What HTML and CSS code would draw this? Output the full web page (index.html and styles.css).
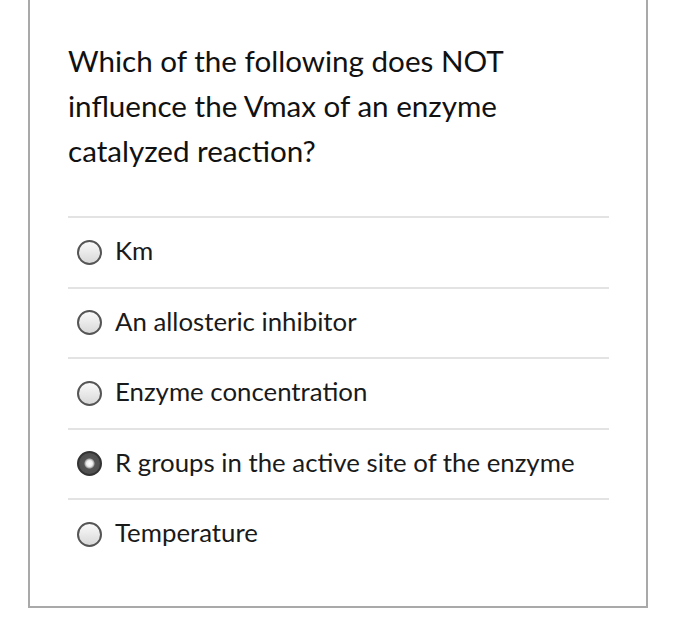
FILE: index.html
```html
<!DOCTYPE html>
<html>
<head>
<meta charset="utf-8">
<link rel="stylesheet" href="styles.css">
</head>
<body>
<div class="card">
  <p class="question">Which of the following does NOT influence the Vmax of an enzyme catalyzed reaction?</p>
  <ul class="options">
    <li class="option"><span class="radio"></span><span class="label">Km</span></li>
    <li class="option"><span class="radio"></span><span class="label">An allosteric inhibitor</span></li>
    <li class="option"><span class="radio"></span><span class="label">Enzyme concentration</span></li>
    <li class="option"><span class="radio checked"></span><span class="label">R groups in the active site of the enzyme</span></li>
    <li class="option"><span class="radio"></span><span class="label">Temperature</span></li>
  </ul>
</div>
</body>
</html>
```

FILE: styles.css
```css
html, body {
  margin: 0;
  padding: 0;
  background: #fff;
}
body {
  font-family: "Lato", "Liberation Sans", sans-serif;
  color: #111;
}
.card {
  margin-left: 28px;
  border: 2px solid #a9a9a9;
  border-top: none;
  padding: 38px 37px 37px 38px;
  box-sizing: content-box;
  width: 541px;
}
.question {
  margin: 0 0 43px 0;
  font-size: 29.6px;
  line-height: 45px;
  width: 470px;
  color: #111;
}
.options {
  list-style: none;
  margin: 0;
  padding: 0;
}
.option {
  display: flex;
  align-items: center;
  gap: 13px;
  border-top: 2px solid #e3e3e3;
  height: 68.5px;
  padding-left: 9px;
  font-size: 25.8px;
  color: #1a1a1a;
}
.radio {
  width: 21px;
  height: 21px;
  border-radius: 50%;
  border: 2px solid #555;
  background: linear-gradient(#fafafa, #d8d8d8);
  flex: none;
}
.radio.checked {
  border-color: #333;
  background: radial-gradient(circle at 50% 50%, #fff 0, #eee 3px, #aaa 4.5px, #555 5.5px, #4a4a4a 100%);
}
.label {
  line-height: 30px;
  padding-bottom: 4px;
}
```
